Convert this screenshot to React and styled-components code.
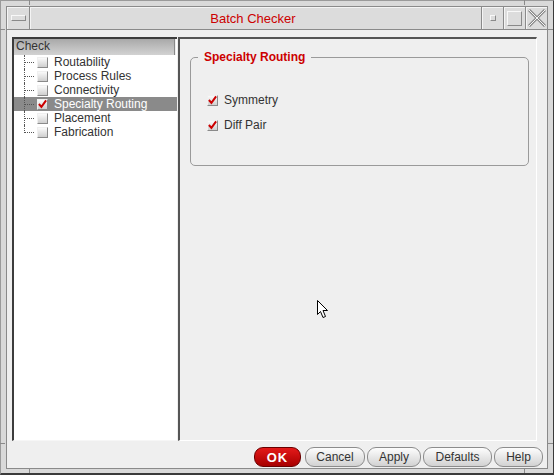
import React from "react";
import styled, { createGlobalStyle } from "styled-components";

const Global = createGlobalStyle`
  html, body { margin: 0; padding: 0; background: #d9d9d9; }
  * { box-sizing: border-box; }
`;

const Window = styled.div`
  position: relative;
  width: 554px;
  height: 475px;
  background: #d9d9d9;
  border-top: 1px solid #9a9a9a;
  border-left: 1px solid #9a9a9a;
  border-right: 1px solid #3a3a3a;
  border-bottom: 2px solid #3a3a3a;
  padding: 5px 5px 4px 5px;
  font-family: "Liberation Sans", Arial, sans-serif;
  font-size: 12px;
  color: #333;
`;

const Tick = styled.div`
  position: absolute;
  background: #8a8a8a;
  width: ${(p) => (p.$v ? "1px" : "5px")};
  height: ${(p) => (p.$v ? "5px" : "1px")};
`;

const Inner = styled.div`
  height: 100%;
  border: 1px solid #8a8a8a;
  display: flex;
  flex-direction: column;
`;

const TitleBar = styled.div`
  display: flex;
  height: 23px;
  background: #dcdcdc;
  border-bottom: 1px solid #8a8a8a;
`;

const Cell = styled.div`
  width: ${(p) => p.$w || 22}px;
  flex: ${(p) => (p.$grow ? 1 : "none")};
  display: flex;
  align-items: center;
  justify-content: center;
  box-shadow: inset 1px 1px #f4f4f4;
  border-left: ${(p) => (p.$first ? "none" : "1px solid #8a8a8a")};
`;

const Title = styled.span`
  color: #cc0000;
  font-size: 13px;
  margin-right: 5px;
`;

const Bevel = styled.div`
  width: ${(p) => p.$w}px;
  height: ${(p) => p.$h}px;
  border: 1px solid;
  border-color: #f8f8f8 #8a8a8a #8a8a8a #f8f8f8;
`;

const Client = styled.div`
  flex: 1;
  background: #efefef;
  padding: 7px 2px 0 5px;
  display: flex;
  flex-direction: column;
`;

const Panes = styled.div`
  display: flex;
  height: 404px;
  margin-right: 8px;
`;

const TreePane = styled.div`
  width: 165px;
  background: #fff;
  border-left: 2px solid #3c3c3c;
  border-top: 2px solid #3c3c3c;
  border-bottom: 1px solid #f6f6f6;
`;

const TreeHeader = styled.div`
  height: 16px;
  width: 161px;
  padding-left: 2px;
  line-height: 15px;
  color: #333;
  background: linear-gradient(#a9a9a9, #d2d2d2);
  border-right: 1px solid #888;
  box-shadow: 1px 0 #eee;
`;

const TreeRow = styled.div`
  display: flex;
  align-items: center;
  height: 14px;
  background: ${(p) => (p.$selected ? "#8a8a8a" : "transparent")};
  color: ${(p) => (p.$selected ? "#fff" : "#333")};
`;

const Connector = styled.span`
  position: relative;
  width: 20px;
  height: 14px;
  flex: none;
  &::before {
    content: "";
    position: absolute;
    left: 10px;
    top: 0;
    height: ${(p) => (p.$last ? "8px" : "14px")};
    border-left: 1px dotted #555;
  }
  &::after {
    content: "";
    position: absolute;
    left: 11px;
    top: 7px;
    width: 9px;
    border-top: 1px dotted #555;
  }
`;

const Box = styled.span`
  width: 11px;
  height: 11px;
  flex: none;
  margin-left: ${(p) => p.$ml || 0}px;
  background: linear-gradient(#fafafa, #cfcfcf);
  border: 1px solid;
  border-color: #f0f0f0 #8a8a8a #8a8a8a #f0f0f0;
  display: flex;
  align-items: center;
  justify-content: center;
`;

const Label = styled.span`
  margin-left: 6px;
  white-space: nowrap;
`;

const FormPane = styled.div`
  flex: 1;
  border-top: 2px solid #555;
  border-left: 2px solid #555;
  border-right: 1px solid #fff;
  border-bottom: 1px solid #fff;
  margin-left: 1px;
`;

const Group = styled.fieldset`
  margin: 11px 7px 0 10px;
  padding: 0;
  border: 1px solid #9a9a9a;
  border-radius: 5px;
`;

const GroupBody = styled.div`
  padding: 29px 0 33px 16px;
  display: flex;
  flex-direction: column;
  gap: 11px;
`;

const Legend = styled.legend`
  margin-left: 7px;
  padding: 0 6px;
  color: #cc0000;
  font-weight: bold;
  font-size: 12px;
  line-height: 14px;
`;

const OptRow = styled.div`
  display: flex;
  align-items: center;
  height: 14px;
`;

const ButtonBar = styled.div`
  display: flex;
  justify-content: flex-end;
  margin-top: 6px;
  padding-right: 2px;
  gap: 2px;
`;

const Button = styled.button`
  width: ${(p) => p.$w}px;
  height: 20px;
  padding: 0;
  border: 1px solid ${(p) => (p.$primary ? "#6a0000" : "#8c8c8c")};
  border-radius: 9px;
  background: ${(p) =>
    p.$primary
      ? "linear-gradient(#e41a1a, #a80000)"
      : "linear-gradient(#fdfdfd, #d2d2d2)"};
  color: ${(p) => (p.$primary ? "#fff" : "#333")};
  font-family: "Liberation Sans", Arial, sans-serif;
  font-size: ${(p) => (p.$primary ? 13 : 12)}px;
  font-weight: ${(p) => (p.$primary ? "bold" : "normal")};
  letter-spacing: ${(p) => (p.$primary ? "1px" : "0")};
  margin-right: ${(p) => (p.$primary ? 2 : 0)}px;
`;

const Cursor = styled.svg`
  position: absolute;
  left: 316px;
  top: 299px;
`;

const Check = () => (
  <svg width="10" height="10" viewBox="0 0 10 10">
    <path d="M1 5 L3.8 8.2 L9 1" fill="none" stroke="#cc0000" strokeWidth="2.2" />
  </svg>
);

const items = [
  { name: "Routability", checked: false },
  { name: "Process Rules", checked: false },
  { name: "Connectivity", checked: false },
  { name: "Specialty Routing", checked: true, selected: true },
  { name: "Placement", checked: false },
  { name: "Fabrication", checked: false },
];

const ticks = [
  { left: 28, top: -1, v: true },
  { left: 523, top: -1, v: true },
  { left: 28, top: 467, v: true },
  { left: 523, top: 467, v: true },
  { left: -1, top: 28, v: false },
  { left: -1, top: 442, v: false },
  { left: 547, top: 28, v: false },
  { left: 547, top: 442, v: false },
];

export default function App() {
  return (
    <>
      <Global />
      <Window>
        {ticks.map((t, i) => (
          <Tick key={i} $v={t.v} style={{ left: t.left, top: t.top }} />
        ))}
        <Inner>
          <TitleBar>
            <Cell $first>
              <Bevel $w={15} $h={6} />
            </Cell>
            <Cell $grow>
              <Title>Batch Checker</Title>
            </Cell>
            <Cell>
              <Bevel $w={6} $h={6} />
            </Cell>
            <Cell>
              <Bevel $w={15} $h={15} />
            </Cell>
            <Cell>
              <svg width="18" height="18" viewBox="0 0 18 18">
                <path d="M1 1 L17 17 M17 1 L1 17" stroke="#8a8a8a" strokeWidth="3" />
                <path d="M1 1 L17 17 M17 1 L1 17" stroke="#f4f4f4" strokeWidth="1" />
              </svg>
            </Cell>
          </TitleBar>
          <Client>
            <Panes>
              <TreePane>
                <TreeHeader>Check</TreeHeader>
                {items.map((it, i) => (
                  <TreeRow key={it.name} $selected={it.selected}>
                    <Connector $last={i === items.length - 1} />
                    <Box $ml={3}>{it.checked && <Check />}</Box>
                    <Label>{it.name}</Label>
                  </TreeRow>
                ))}
              </TreePane>
              <FormPane>
                <Group>
                  <Legend>Specialty Routing</Legend>
                  <GroupBody>
                    <OptRow>
                      <Box>
                        <Check />
                      </Box>
                      <Label>Symmetry</Label>
                    </OptRow>
                    <OptRow>
                      <Box>
                        <Check />
                      </Box>
                      <Label>Diff Pair</Label>
                    </OptRow>
                  </GroupBody>
                </Group>
              </FormPane>
            </Panes>
            <ButtonBar>
              <Button $primary $w={47}>OK</Button>
              <Button $w={60}>Cancel</Button>
              <Button $w={54}>Apply</Button>
              <Button $w={69}>Defaults</Button>
              <Button $w={49}>Help</Button>
            </ButtonBar>
          </Client>
        </Inner>
        <Cursor width="12" height="19" viewBox="0 0 12 19">
          <path
            d="M0.5 0.5 L0.5 14.5 L3.5 11.5 L6 17.5 L8.5 16.5 L6 10.5 L10.5 10.5 Z"
            fill="#fff"
            stroke="#000"
            strokeWidth="1"
          />
        </Cursor>
      </Window>
    </>
  );
}
